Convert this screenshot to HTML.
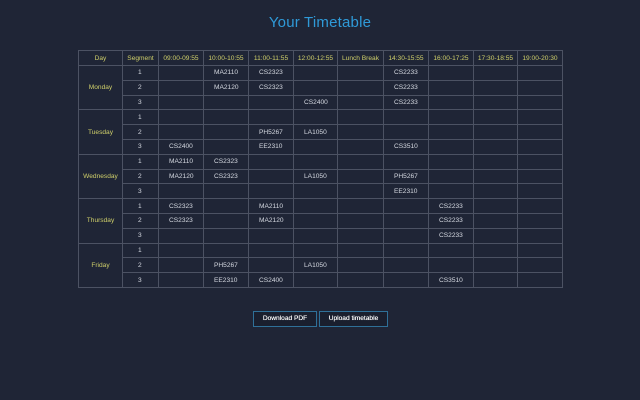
<!DOCTYPE html>
<html><head><style>
html,body{margin:0;padding:0;width:640px;height:400px;background:#1f2536;overflow:hidden;font-family:"Liberation Sans",sans-serif;}
h1{position:absolute;top:14px;left:0;width:640px;text-align:center;margin:0;font-weight:normal;font-size:15px;color:#2f9ad8;letter-spacing:0.2px}
table{position:absolute;left:78px;top:50px;border-collapse:collapse;table-layout:fixed;width:484px}
td,th{border:1px solid #4c5263;height:13.8px;padding:0 0 0 10px;font-size:6.6px;color:#d4d8e0;font-weight:normal;white-space:nowrap;overflow:hidden}
th{color:#cfcf6a;text-align:center;padding:0;height:14px}
td.d{color:#cfcf6a;text-align:center;padding:0}
td.s{padding-left:15px}
tr.g td{border-top:1px solid #646a7a}
.b{position:absolute;top:311px;height:14px;border:1px solid #2f7098;background:#1a1f2e;color:#fff;font-size:6.6px;text-align:center;line-height:14px;font-weight:normal;text-shadow:0 0 0.4px #fff}
</style></head><body>
<h1>Your Timetable</h1>
<table>
<colgroup><col style="width:44px"><col style="width:36px"><col style="width:45px"><col style="width:45px"><col style="width:45px"><col style="width:44px"><col style="width:46px"><col style="width:45px"><col style="width:45px"><col style="width:44px"><col style="width:45px"></colgroup>
<tr><th>Day</th><th>Segment</th><th>09:00-09:55</th><th>10:00-10:55</th><th>11:00-11:55</th><th>12:00-12:55</th><th>Lunch Break</th><th>14:30-15:55</th><th>16:00-17:25</th><th>17:30-18:55</th><th>19:00-20:30</th></tr>
<tr class="g"><td class="d" rowspan="3">Monday</td><td class="s">1</td><td></td><td>MA2110</td><td>CS2323</td><td></td><td></td><td>CS2233</td><td></td><td></td><td></td></tr>
<tr><td class="s">2</td><td></td><td>MA2120</td><td>CS2323</td><td></td><td></td><td>CS2233</td><td></td><td></td><td></td></tr>
<tr><td class="s">3</td><td></td><td></td><td></td><td>CS2400</td><td></td><td>CS2233</td><td></td><td></td><td></td></tr>
<tr class="g"><td class="d" rowspan="3">Tuesday</td><td class="s">1</td><td></td><td></td><td></td><td></td><td></td><td></td><td></td><td></td><td></td></tr>
<tr><td class="s">2</td><td></td><td></td><td>PH5267</td><td>LA1050</td><td></td><td></td><td></td><td></td><td></td></tr>
<tr><td class="s">3</td><td>CS2400</td><td></td><td>EE2310</td><td></td><td></td><td>CS3510</td><td></td><td></td><td></td></tr>
<tr class="g"><td class="d" rowspan="3">Wednesday</td><td class="s">1</td><td>MA2110</td><td>CS2323</td><td></td><td></td><td></td><td></td><td></td><td></td><td></td></tr>
<tr><td class="s">2</td><td>MA2120</td><td>CS2323</td><td></td><td>LA1050</td><td></td><td>PH5267</td><td></td><td></td><td></td></tr>
<tr><td class="s">3</td><td></td><td></td><td></td><td></td><td></td><td>EE2310</td><td></td><td></td><td></td></tr>
<tr class="g"><td class="d" rowspan="3">Thursday</td><td class="s">1</td><td>CS2323</td><td></td><td>MA2110</td><td></td><td></td><td></td><td>CS2233</td><td></td><td></td></tr>
<tr><td class="s">2</td><td>CS2323</td><td></td><td>MA2120</td><td></td><td></td><td></td><td>CS2233</td><td></td><td></td></tr>
<tr><td class="s">3</td><td></td><td></td><td></td><td></td><td></td><td></td><td>CS2233</td><td></td><td></td></tr>
<tr class="g"><td class="d" rowspan="3">Friday</td><td class="s">1</td><td></td><td></td><td></td><td></td><td></td><td></td><td></td><td></td><td></td></tr>
<tr><td class="s">2</td><td></td><td>PH5267</td><td></td><td>LA1050</td><td></td><td></td><td></td><td></td><td></td></tr>
<tr><td class="s">3</td><td></td><td>EE2310</td><td>CS2400</td><td></td><td></td><td></td><td>CS3510</td><td></td><td></td></tr>
</table>
<div class="b" style="left:253px;width:62px">Download PDF</div>
<div class="b" style="left:319px;width:67px">Upload timetable</div>
</body></html>
